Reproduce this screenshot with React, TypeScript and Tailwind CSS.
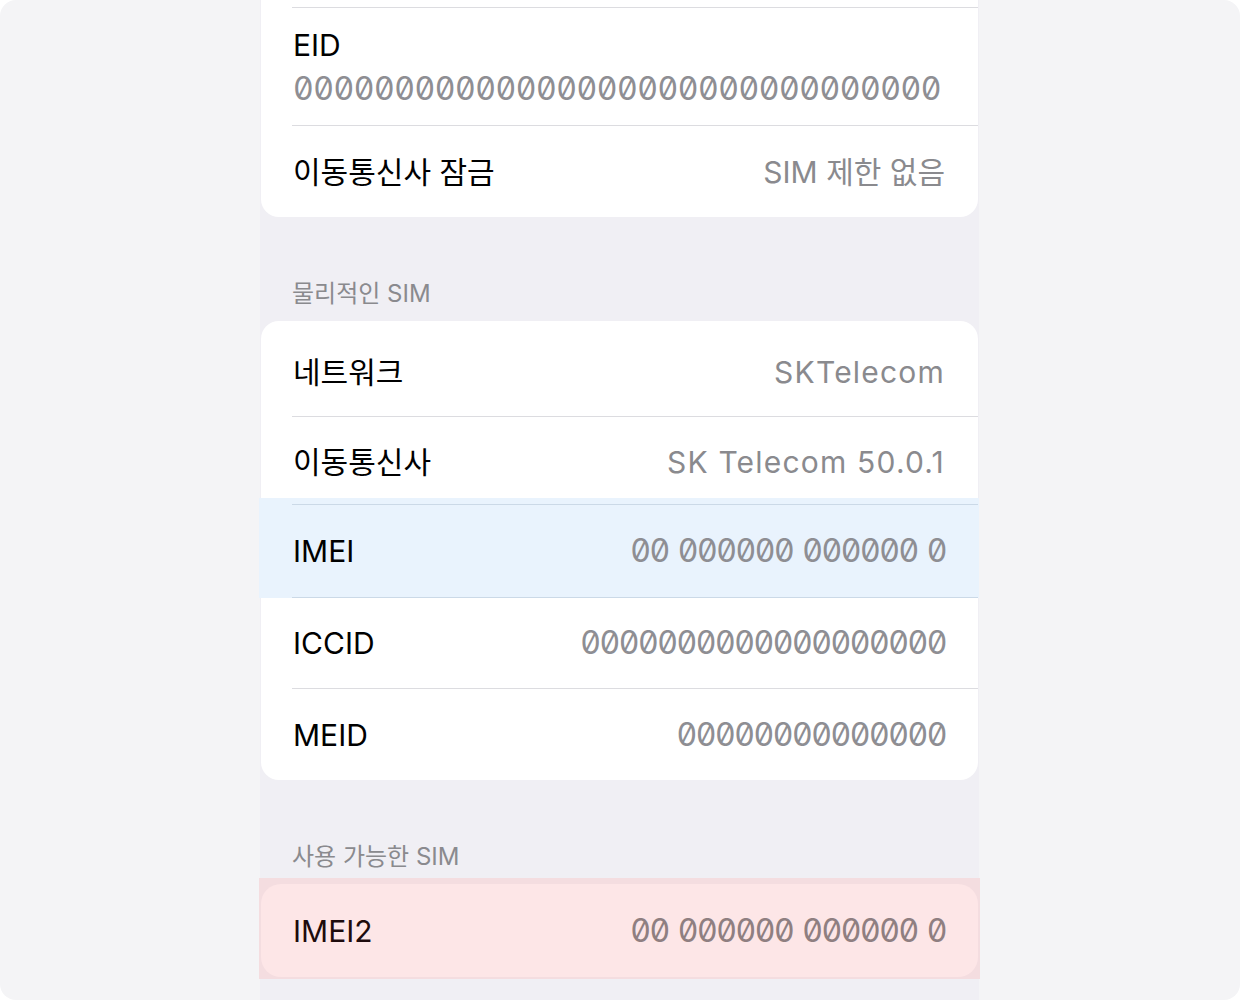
import React from "react";

const SANS = "font-['Inter','Noto_Sans_CJK_KR',sans-serif]";
const DIGITS = "font-['Inter',sans-serif] slashed-zero tabular-nums";

function Separator() {
  return <div className="ml-[31px] h-px bg-[#dcdce0]" />;
}

function Row({
  label,
  value,
  isMono = false,
  height,
  pad = "",
  labelClass = "text-black",
  valueClass,
}: {
  label: string;
  value: React.ReactNode;
  isMono?: boolean;
  height: string;
  pad?: string;
  labelClass?: string;
  valueClass?: string;
}) {
  return (
    <div
      className={`relative flex items-center justify-between pl-[32px] ${isMono ? "pr-[32px]" : "pr-[33px]"} ${height} ${pad}`}
    >
      <span className={`${SANS} text-[30px] leading-[36px] ${labelClass}`}>{label}</span>
      {isMono ? (
        <span className={`${DIGITS} text-[32px] leading-[36px] tracking-[-1.5px] ${valueClass ?? "text-[#8e8e93]"}`}>
          {value}
        </span>
      ) : (
        <span className={`${SANS} text-[30px] leading-[36px] ${valueClass ?? "text-[#8a8a8e]"}`}>{value}</span>
      )}
    </div>
  );
}

function Imei() {
  return (
    <span className="flex gap-[9px]">
      <span>00</span>
      <span>000000</span>
      <span>000000</span>
      <span>0</span>
    </span>
  );
}

function SectionHeader({ title }: { title: string }) {
  return (
    <div className={`${SANS} pl-[32px] pt-[62px] pb-[12px] text-[24px] leading-[30px] text-[#8a8a8e]`}>{title}</div>
  );
}

export default function App() {
  return (
    <div className="min-h-screen bg-white">
      <div className="h-[1000px] w-[1240px] overflow-hidden rounded-[16px] bg-[#f4f4f6]">
        <div className="ml-[260px] h-full w-[719px] bg-[#f0eff4]">
          {/* eSIM card, scrolled partly out of view */}
          <div className="mx-px rounded-b-[18px] bg-white">
            <div className="h-[7px]" />
            <Separator />
            <div className="h-[117px] pl-[32px] pr-[29px] pt-[19px]">
              <div className={`${SANS} text-[30px] leading-[36px] text-black`}>EID</div>
              <div className={`${DIGITS} mt-[8px] text-[32px] leading-[36px] tracking-[-0.5px] text-[#8e8e93]`}>
                00000000000000000000000000000000
              </div>
            </div>
            <Separator />
            <Row label="이동통신사 잠금" value="SIM 제한 없음" height="h-[91px]" />
          </div>

          <SectionHeader title="물리적인 SIM" />
          <div className="mx-px rounded-[18px] bg-white">
            <Row
              label="네트워크"
              value="SKTelecom"
              height="h-[95px]"
              pad="pt-[6px]"
              valueClass="text-[#8a8a8e] tracking-[1.2px]"
            />
            <Separator />
            <Row
              label="이동통신사"
              value="SK Telecom 50.0.1"
              height="h-[87px]"
              pad="pt-[3px]"
              valueClass="text-[#8a8a8e] tracking-[1.2px]"
            />
            {/* selected IMEI row */}
            <div className="relative">
              <div className="absolute -top-[6px] bottom-0 -left-[2px] -right-[1px] bg-[#e9f3fd]" />
              <div className="relative ml-[31px] h-px bg-[#cbd9e7]" />
              <Row label="IMEI" value={<Imei />} isMono height="h-[92px]" />
              <div className="relative ml-[31px] h-px bg-[#cbd9e7]" />
            </div>
            <Row label="ICCID" value="0000000000000000000" isMono height="h-[90px]" />
            <Separator />
            <Row label="MEID" value="00000000000000" isMono height="h-[91px]" />
          </div>

          <SectionHeader title="사용 가능한 SIM" />
          <div className="relative">
            <div className="absolute -top-[6px] -bottom-[2px] -left-[1px] -right-[1px] bg-[#f4dde0]" />
            <div className="relative mx-px rounded-[20px] bg-[#fde6e7]">
              <Row
                label="IMEI2"
                value={<Imei />}
                isMono
                height="h-[93px]"
                labelClass="text-[#1e0b0d]"
                valueClass="text-[#8f7f81]"
              />
            </div>
          </div>
        </div>
      </div>
    </div>
  );
}
